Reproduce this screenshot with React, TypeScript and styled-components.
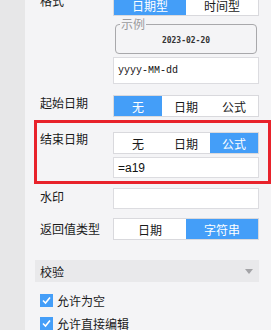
import React from "react";
import styled, { createGlobalStyle } from "styled-components";

const Global = createGlobalStyle`
  html, body { margin: 0; padding: 0; background: #f4f4f6; overflow: hidden; }
  body { font-family: "Noto Sans CJK SC", "Liberation Sans", sans-serif; font-size: 12px; color: #1a1a1a; }
`;

const Page = styled.div`
  display: flex;
  width: 271px;
  height: 330px;
  overflow: hidden;
`;

const Strip = styled.div`
  width: 25px;
  flex: none;
  background: #e7e7e8;
`;

const Panel = styled.div`
  flex: 1;
  display: flex;
  flex-direction: column;
  padding-left: 9px;
  background: #f4f4f6;
`;

const Row = styled.div<{ $mt?: number }>`
  display: flex;
  align-items: flex-start;
  padding: 0 12px 0 6px;
  margin-top: ${(p) => p.$mt ?? 0}px;
`;

const Highlight = styled.div`
  display: flex;
  align-items: flex-start;
  margin-top: 3px;
  border: 3px solid #e8222b;
  padding: 9px 9px 3px 3px;
`;

const Label = styled.div<{ $top?: number }>`
  width: 73px;
  flex: none;
  line-height: 16px;
  font-size: 12px;
  margin-top: ${(p) => p.$top ?? 0}px;
  white-space: nowrap;
`;

const Controls = styled.div`
  flex: 1;
  display: flex;
  flex-direction: column;
`;

const Segment = styled.div`
  display: flex;
  height: 22px;
  box-sizing: border-box;
  border: 1px solid #d9d9dd;
  background: #fff;
`;

const SegItem = styled.div<{ $on?: boolean }>`
  flex: 1;
  display: flex;
  align-items: center;
  justify-content: center;
  font-size: 12px;
  background: ${(p) => (p.$on ? "#449ef8" : "#fff")};
  color: ${(p) => (p.$on ? "#fff" : "#1a1a1a")};
`;

const Example = styled.div`
  margin: 8px 2px 0;
  height: 30px;
  box-sizing: border-box;
  border: 1px solid #a8a8ab;
  border-radius: 4px;
  display: flex;
  align-items: center;
  justify-content: center;
  position: relative;
`;

const Legend = styled.span`
  position: absolute;
  top: -8px;
  left: 4px;
  padding: 0 1px;
  background: #f4f4f6;
  color: #9a9a9d;
  font-size: 12px;
  line-height: 14px;
`;

const DateText = styled.div`
  font-family: "DejaVu Sans Mono", "Liberation Mono", monospace;
  font-size: 8px;
  font-weight: bold;
  color: #333;
  margin-top: 3px;
`;

const Input = styled.div<{ $h?: number; $mono?: boolean; $mt?: number }>`
  height: ${(p) => p.$h ?? 21}px;
  box-sizing: border-box;
  border: 1px solid #dcdce0;
  background: #fff;
  display: flex;
  align-items: center;
  padding-left: 4px;
  margin-top: ${(p) => p.$mt ?? 3}px;
  font-family: ${(p) =>
    p.$mono ? `"Liberation Mono", monospace` : `"Liberation Sans", sans-serif`};
  font-size: ${(p) => (p.$mono ? 10 : 12)}px;
  color: #111;
`;

const Header = styled.div`
  margin: 20px 12px 0 1px;
  height: 24px;
  background: #e9e9eb;
  display: flex;
  align-items: center;
  justify-content: space-between;
  padding: 0 6px 0 5px;
`;

const Caret = styled.div`
  width: 0;
  height: 0;
  border-left: 4px solid transparent;
  border-right: 4px solid transparent;
  border-top: 5px solid #a4a4a7;
`;

const CheckRow = styled.div<{ $mt: number }>`
  display: flex;
  align-items: center;
  gap: 4px;
  padding-left: 6px;
  margin-top: ${(p) => p.$mt}px;
  height: 14px;
  font-size: 12px;
  white-space: nowrap;
`;

const Box = styled.span`
  width: 13px;
  height: 13px;
  background: #449ef8;
  display: inline-flex;
  align-items: center;
  justify-content: center;
  flex: none;
`;

const Check = () => (
  <Box>
    <svg width="11" height="11" viewBox="0 0 11 11">
      <path d="M2 5.5 L4.5 8 L9 2.5" stroke="#fff" strokeWidth="1.6" fill="none" />
    </svg>
  </Box>
);

export default function App() {
  return (
    <Page>
      <Global />
      <Strip />
      <Panel>
        <Row $mt={-6}>
          <Label $top={-1}>格式</Label>
          <Controls>
            <Segment>
              <SegItem $on>日期型</SegItem>
              <SegItem>时间型</SegItem>
            </Segment>
            <Example>
              <Legend>示例</Legend>
              <DateText>2023-02-20</DateText>
            </Example>
            <Input $h={27} $mono>yyyy-MM-dd</Input>
          </Controls>
        </Row>
        <Row $mt={11}>
          <Label $top={0}>起始日期</Label>
          <Controls>
            <Segment>
              <SegItem $on>无</SegItem>
              <SegItem>日期</SegItem>
              <SegItem>公式</SegItem>
            </Segment>
          </Controls>
        </Row>
        <Highlight>
          <Label $top={-1}>结束日期</Label>
          <Controls>
            <Segment>
              <SegItem>无</SegItem>
              <SegItem>日期</SegItem>
              <SegItem $on>公式</SegItem>
            </Segment>
            <Input $h={21}>=a19</Input>
          </Controls>
        </Highlight>
        <Row $mt={4}>
          <Label $top={1}>水印</Label>
          <Controls>
            <Input $h={21} $mt={0} />
          </Controls>
        </Row>
        <Row $mt={9}>
          <Label $top={3}>返回值类型</Label>
          <Controls>
            <Segment>
              <SegItem>日期</SegItem>
              <SegItem $on>字符串</SegItem>
            </Segment>
          </Controls>
        </Row>
        <Header>
          <span>校验</span>
          <Caret />
        </Header>
        <CheckRow $mt={11}>
          <Check />
          允许为空
        </CheckRow>
        <CheckRow $mt={9}>
          <Check />
          允许直接编辑
        </CheckRow>
      </Panel>
    </Page>
  );
}
